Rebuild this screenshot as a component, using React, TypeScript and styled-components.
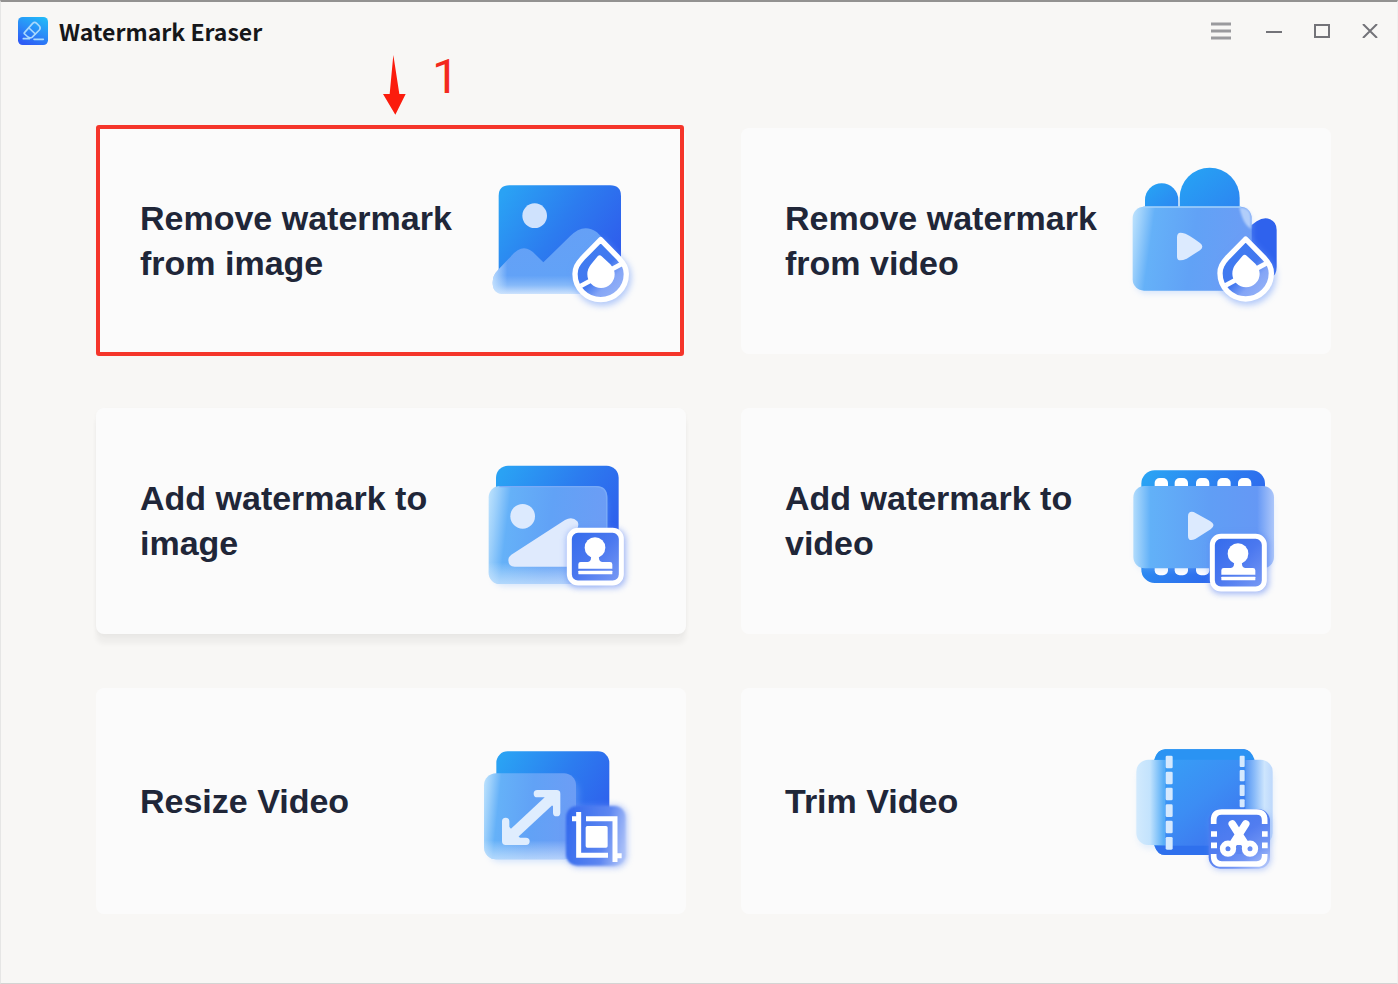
import React from "react";
import styled, { createGlobalStyle } from "styled-components";

const GlobalStyle = createGlobalStyle`
  *, *::before, *::after { box-sizing: border-box; }
  html, body, #root { height: 100%; }
  body {
    margin: 0;
    background: #f8f7f5;
    font-family: "Liberation Sans", Arial, sans-serif;
  }
`;

const Window = styled.div`
  min-height: 100%;
  display: flex;
  flex-direction: column;
  background: #f8f7f5;
  border: 1px solid #e6e6e5;
  border-top: 2px solid #939291;
  border-right-color: #f0f0ef;
  border-bottom-color: #d4d4d3;
`;

const TitleBar = styled.header`
  display: flex;
  align-items: center;
  justify-content: space-between;
  height: 58px;
  padding: 0 11px 0 17px;
`;

const Brand = styled.div`
  display: flex;
  align-items: center;
  gap: 11px;
`;

const BrandName = styled.h1`
  margin: 0;
  font: 700 23px/32px "Noto Sans CJK SC", sans-serif;
  color: #16171a;
`;

const WindowControls = styled.div`
  display: flex;
  align-items: center;
  gap: 16px;
`;

const ControlButton = styled.button`
  display: grid;
  place-items: center;
  width: 32px;
  height: 32px;
  padding: 0;
  border: 0;
  background: none;
  color: #737378;
  cursor: pointer;

  &:first-child {
    margin-right: 5px;
    color: #9a9a9d;
  }
`;

const ToolGrid = styled.main`
  display: grid;
  grid-template-columns: 1fr 1fr;
  column-gap: 55px;
  row-gap: 54px;
  padding: 68px 66px 64px 95px;
`;

const ToolSlot = styled.div`
  position: relative;
`;

const ToolCard = styled.button<{ $raised?: boolean }>`
  display: flex;
  align-items: center;
  width: 100%;
  min-height: 226px;
  padding: 0 30px 0 44px;
  border: 0;
  border-radius: 8px;
  background: #fbfbfb;
  box-shadow: ${(p) =>
    p.$raised ? "0 10px 5px rgba(0, 0, 0, 0.04), 0 2px 4px rgba(0, 0, 0, 0.03)" : "none"};
  text-align: left;
  cursor: pointer;
`;

const ToolName = styled.span`
  flex: 1;
  font: 700 34px/45px "Liberation Sans", Arial, sans-serif;
  color: #202638;
`;

const Art = styled.svg`
  flex: none;
  width: 180px;
  height: 180px;
`;

const HighlightFrame = styled.div`
  position: absolute;
  inset: -3px 2px -2px 0;
  border: 4px solid #f5352a;
  border-radius: 3px;
  pointer-events: none;
`;

const StepMarker = styled.div`
  position: absolute;
  left: 287px;
  bottom: calc(100% + 13px);
  display: flex;
  align-items: flex-end;
  gap: 26px;
`;

const StepNumber = styled.span`
  font: 400 48px/76px Roboto, sans-serif;
  color: #f32a1d;
`;

const SharedDefs = styled.svg`
  position: absolute;
  width: 0;
  height: 0;
`;

const Paints = () => (
  <SharedDefs aria-hidden="true">
    <defs>
      <linearGradient id="blue" x1="0" y1="0.15" x2="1" y2="0.7">
        <stop offset="0" stopColor="#2aa2f4" />
        <stop offset="0.5" stopColor="#2c7cef" />
        <stop offset="1" stopColor="#2f5cec" />
      </linearGradient>
      <linearGradient id="sky" x1="0" y1="0" x2="1" y2="1">
        <stop offset="0" stopColor="#26a5f4" />
        <stop offset="1" stopColor="#2d83f1" />
      </linearGradient>
      <linearGradient id="glass" x1="0" y1="0" x2="1" y2="0.1">
        <stop offset="0" stopColor="#c0e4fd" />
        <stop offset="0.08" stopColor="#9dd0fb" />
        <stop offset="0.19" stopColor="#65b1f8" />
        <stop offset="0.55" stopColor="#61a2f6" />
        <stop offset="1" stopColor="#6c9df5" />
      </linearGradient>
      <linearGradient id="glassBoth" x1="0" y1="0" x2="1" y2="0">
        <stop offset="0" stopColor="#b2dcfc" />
        <stop offset="0.12" stopColor="#62b1f8" />
        <stop offset="0.55" stopColor="#609ef5" />
        <stop offset="0.88" stopColor="#6598f5" />
        <stop offset="1" stopColor="#adc7fa" />
      </linearGradient>
      <linearGradient id="fade" x1="0" y1="0" x2="0" y2="1">
        <stop offset="0" stopColor="#fff" stopOpacity="0" />
        <stop offset="0.78" stopColor="#fff" stopOpacity="0" />
        <stop offset="1" stopColor="#e6f3ff" stopOpacity="0.6" />
      </linearGradient>
      <linearGradient id="hill" gradientUnits="userSpaceOnUse" x1="0" y1="200" x2="0" y2="404">
        <stop offset="0" stopColor="#65a0f6" />
        <stop offset="0.72" stopColor="#62a2f7" />
        <stop offset="0.86" stopColor="#86b9f9" />
        <stop offset="1" stopColor="#d3e6fd" />
      </linearGradient>
      <linearGradient id="hillSide" gradientUnits="userSpaceOnUse" x1="68" y1="0" x2="112" y2="0">
        <stop offset="0" stopColor="#c9e4fe" stopOpacity="0.85" />
        <stop offset="1" stopColor="#c9e4fe" stopOpacity="0" />
      </linearGradient>
      <linearGradient id="badge" x1="0" y1="0" x2="1" y2="1">
        <stop offset="0" stopColor="#326bec" />
        <stop offset="0.5" stopColor="#4b78ef" />
        <stop offset="1" stopColor="#7c9cf5" />
      </linearGradient>
      <linearGradient id="trimBadge" x1="0.1" y1="0" x2="0.8" y2="1">
        <stop offset="0" stopColor="#3f79ef" />
        <stop offset="0.5" stopColor="#527df0" />
        <stop offset="0.8" stopColor="#7396f4" />
        <stop offset="1" stopColor="#a9bff9" />
      </linearGradient>
      <linearGradient id="cropBadge" x1="0" y1="0.4" x2="1" y2="0.6">
        <stop offset="0" stopColor="#356bed" />
        <stop offset="0.65" stopColor="#5d86f1" />
        <stop offset="1" stopColor="#a9bff8" />
      </linearGradient>
      <linearGradient id="drop" x1="0.2" y1="0.2" x2="0.8" y2="0.9">
        <stop offset="0" stopColor="#3f7cf1" />
        <stop offset="0.5" stopColor="#4378ef" />
        <stop offset="0.75" stopColor="#84a5f6" />
        <stop offset="1" stopColor="#92b0f7" />
      </linearGradient>
      <linearGradient id="film" x1="0.1" y1="0" x2="0.7" y2="1">
        <stop offset="0" stopColor="#379ff6" />
        <stop offset="0.5" stopColor="#3c8df4" />
        <stop offset="1" stopColor="#3e72ee" />
      </linearGradient>
      <linearGradient id="pane" x1="0" y1="0" x2="1" y2="0">
        <stop offset="0" stopColor="#d2eafd" />
        <stop offset="0.1" stopColor="#c3e3fd" />
        <stop offset="0.2" stopColor="#58aef7" />
        <stop offset="0.8" stopColor="#5596f4" />
        <stop offset="0.87" stopColor="#8dbdf9" />
        <stop offset="0.94" stopColor="#cde5fd" />
        <stop offset="1" stopColor="#bdd8fc" />
      </linearGradient>
      <filter id="soft" x="-30%" y="-30%" width="160%" height="160%">
        <feGaussianBlur stdDeviation="9" />
      </filter>
      <filter id="edge" x="-10%" y="-10%" width="120%" height="120%">
        <feGaussianBlur stdDeviation="3" />
      </filter>
    </defs>
  </SharedDefs>
);

const DROP =
  "M392 239 L338 294 C321 313 315 324 315 342 A77 77 0 0 0 469 342 C469 324 463 313 446 294 Z";

const DropBadge = ({ x = 0, y = 0 }: { x?: number; y?: number }) => (
  <g transform={`translate(${x} ${y})`}>
    <path d={DROP} fill="#6d9af8" stroke="#6d9af8" strokeWidth="22" opacity="0.5" filter="url(#soft)" transform="translate(4 8)" />
    <path d={DROP} fill="url(#drop)" stroke="#fff" strokeWidth="16" strokeLinejoin="round" />
    <path d="M332 378 L458 310" stroke="#fff" strokeWidth="14" />
    <path d="M383 289 Q389 283 395 289 L421 313 Q434 328 434 343 A41 41 0 0 1 352 343 Q352 326 364 312 Z" fill="#fff" />
  </g>
);

const StampBadge = ({ x = 0, y = 0 }: { x?: number; y?: number }) => (
  <g transform={`translate(${x} ${y})`}>
    <rect x="290" y="266" width="178" height="178" rx="34" fill="#5a82f2" opacity="0.55" filter="url(#soft)" />
    <rect x="298" y="271" width="156" height="158" rx="26" fill="url(#badge)" stroke="#fff" strokeWidth="15" />
    <circle cx="375" cy="323" r="31" fill="#fff" />
    <path d="M363 344 H387 Q384 362 396 366 H420 Q427 366 427 373 V386 H325 V373 Q325 366 332 366 H354 Q366 362 363 344 Z" fill="#fff" />
    <rect x="325" y="392" width="102" height="11" rx="2" fill="#fff" />
  </g>
);

const HILL =
  "M82 332 L122 290 Q160 242 197 284 L220 307 L300 229 Q340 187 381 217 L453 292 V402 H102 Q68 402 68 368 Q68 346 82 332 Z";

const EraseImageArt = () => (
  <Art viewBox="18 -27 540 540" aria-hidden="true">
    <path d="M86 330 V108 Q86 76 118 76 H421 Q453 76 453 108 V360 H100 Z" fill="url(#blue)" />
    <circle cx="194" cy="167" r="37" fill="#cfe2fd" />
    <path d={HILL} fill="url(#hill)" />
    <path d={HILL} fill="url(#hillSide)" />
    <DropBadge />
  </Art>
);

const EraseVideoArt = () => (
  <Art viewBox="33 3 540 540" aria-hidden="true">
    <path d="M105 190 V150 A50 50 0 0 1 205 150 V190 Z" fill="url(#sky)" />
    <path d="M209 190 V143 A90 90 0 0 1 389 143 V190 Z" fill="url(#sky)" />
    <path d="M405 240 L440 214 Q462 200 480 208 Q500 216 500 240 V350 Q500 385 470 385 H405 Z" fill="#2f62ed" />
    <rect x="76" y="186" width="350" height="244" rx="34" fill="#8dbcfb" opacity="0.35" filter="url(#soft)" />
    <rect x="68" y="170" width="357" height="252" rx="34" fill="url(#glass)" />
    <path d="M388 172 Q423 172 423 204 V236 Q400 226 388 172 Z" fill="#c3dafc" opacity="0.8" filter="url(#edge)" />
    <path d="M100 171 H392" stroke="#a5d2fb" strokeWidth="4" />
    <path d="M201 262 Q201 244 218 249 Q232 251 270 279 Q284 290 270 301 L230 326 Q201 338 201 320 Z" fill="#dceafe" />
    <DropBadge x={15} y={28} />
  </Art>
);

const MarkImageArt = () => (
  <Art viewBox="18 -27 540 540" aria-hidden="true">
    <rect x="78" y="77" width="368" height="320" rx="36" fill="url(#blue)" />
    <rect x="70" y="160" width="340" height="278" rx="34" fill="#8dbcfb" opacity="0.35" filter="url(#soft)" />
    <rect x="56" y="138" width="356" height="294" rx="34" fill="url(#glass)" />
    <rect x="56" y="138" width="356" height="294" rx="34" fill="url(#fade)" />
    <path d="M88 140 H378 Q410 140 410 172 V270" fill="none" stroke="#79aaf7" strokeWidth="4" />
    <circle cx="158" cy="229" r="37" fill="#dceafe" />
    <path d="M124 344 L285 240 Q307 228 322 244 Q328 252 322 266 V380 H134 Q115 380 115 360 Q115 350 124 344 Z" fill="#dfeafd" />
    <StampBadge />
  </Art>
);

const MarkVideoArt = () => (
  <Art viewBox="33 -27 540 540" aria-hidden="true">
    <rect x="94" y="91" width="371" height="338" rx="40" fill="url(#blue)" />
    {[134, 194, 258, 322, 384].map((x) => (
      <React.Fragment key={x}>
        <rect x={x} y="114" width="40" height="44" rx="15" fill="#fff" />
        <rect x={x} y="362" width="40" height="44" rx="15" fill="#fff" />
      </React.Fragment>
    ))}
    <rect x="78" y="160" width="410" height="230" rx="34" fill="#8dbcfb" opacity="0.3" filter="url(#soft)" />
    <rect x="70" y="138" width="422" height="247" rx="34" fill="url(#glassBoth)" />
    <path d="M234 229 Q234 212 251 216 L300 243 Q320 254 302 268 L256 297 Q234 307 234 287 Z" fill="#dceafe" />
    <StampBadge x={9} y={18} />
  </Art>
);

const ResizeArt = () => (
  <Art viewBox="18 -57 540 540" aria-hidden="true">
    <rect x="79" y="64" width="339" height="316" rx="34" fill="url(#blue)" />
    <rect x="56" y="150" width="270" height="246" rx="34" fill="#8dbcfb" opacity="0.35" filter="url(#soft)" />
    <rect x="42" y="130" width="276" height="258" rx="36" fill="url(#glass)" />
    <rect x="42" y="130" width="276" height="258" rx="36" fill="url(#fade)" />
    <g fill="none" stroke="#dfedfe" strokeLinecap="round" strokeLinejoin="round">
      <path d="M116 325 L250 200" strokeWidth="33" strokeLinecap="butt" />
      <path d="M202 191 H260 V248 M107 274 V334 H168" strokeWidth="22" />
    </g>
    <path d="M218 196 H256 V236 Z M111 284 V330 H156 Z" fill="#dfedfe" />
    <rect x="290" y="225" width="182" height="188" rx="36" fill="#6b92f5" opacity="0.5" filter="url(#soft)" />
    <rect x="288" y="228" width="178" height="179" rx="34" fill="url(#cropBadge)" filter="url(#edge)" />
    <g fill="none" stroke="#fff" strokeWidth="15">
      <path d="M306 266 H322 M326 246 V376 H414" />
      <path d="M348 266 H435 V396 M435 377 H455" />
    </g>
    <rect x="347" y="288" width="66" height="65" rx="5" fill="#fff" />
  </Art>
);

const TrimArt = () => (
  <Art viewBox="33 -57 540 540" aria-hidden="true">
    <path d="M166 58 H402 Q420 58 432 90 V345 Q420 375 402 375 H166 Q142 375 132 345 V90 Q142 58 166 58 Z" fill="url(#blue)" />
    <rect x="84" y="110" width="406" height="246" rx="36" fill="#a9d0fb" opacity="0.3" filter="url(#soft)" />
    <rect x="79" y="89" width="409" height="256" rx="36" fill="url(#pane)" />
    <rect x="166" y="60" width="240" height="314" fill="url(#film)" />
    <path d="M166 58 H402 Q422 58 434 89 H134 Q142 58 166 58" fill="#2a93f3" />
    <path d="M134 347 H406 V375 H166 Q142 375 134 347 Z" fill="#2f70ed" />
    {[77, 125, 173, 223, 272, 321].map((y) => (
      <rect key={y} x="167" y={y} width="21" height="38" rx="4" fill="#d5e9fe" />
    ))}
    {[77, 120, 164, 208].map((y) => (
      <rect key={y} x="389" y={y} width="15" height={y === 208 ? 24 : 34} rx="3" fill="#d5e9fe" />
    ))}
    <rect x="299" y="246" width="184" height="174" rx="34" fill="#6b92f5" opacity="0.45" filter="url(#soft)" />
    <rect x="296" y="238" width="184" height="178" rx="34" fill="url(#trimBadge)" />
    <path d="M311 282 V270 Q311 246 335 246 H440 Q464 246 464 270 V282 M311 372 V378 Q311 402 335 402 H440 Q464 402 464 378 V372" fill="none" stroke="#fff" strokeWidth="17" />
    <path d="M303 312 H321 M456 312 H473 M303 346 H321 M456 346 H473" stroke="#fff" strokeWidth="17" />
    <g fill="none" stroke="#fff" strokeWidth="17" strokeLinecap="round">
      <circle cx="354" cy="356" r="16" />
      <circle cx="420" cy="356" r="16" />
      <path d="M368 343 L407 282 M406 343 L367 282" strokeWidth="23" />
    </g>
    <path d="M387 306 L410 345 H364 Z" fill="#fff" />
    <path d="M379 358 L387 350 L395 358 V372 H379 Z" fill="#5b84f1" />
  </Art>
);

const Logo = () => (
  <svg width="30" height="28" viewBox="0 0 90 84" aria-hidden="true">
    <defs>
      <linearGradient id="logo" x1="0.8" y1="0" x2="0.3" y2="1">
        <stop offset="0" stopColor="#22b8f8" />
        <stop offset="0.5" stopColor="#2a8df7" />
        <stop offset="1" stopColor="#2e5cf5" />
      </linearGradient>
    </defs>
    <rect width="90" height="84" rx="14" fill="url(#logo)" />
    <g fill="none" stroke="#a9d9fd" strokeWidth="5" strokeLinecap="round" strokeLinejoin="round">
      <path d="M20 46 L44 19 Q50 13 56 19 L64 27 Q69 33 64 39 L42 61 Q36 65 30 60 L20 51 Q17 49 20 46 Z" />
      <path d="M33 33 L52 51 M16 65 H34 M48 67 H76" />
    </g>
  </svg>
);

interface Tool {
  name: string;
  art: React.ReactNode;
  raised?: boolean;
  step?: number;
}

const tools: Tool[] = [
  { name: "Remove watermark from image", art: <EraseImageArt />, step: 1 },
  { name: "Remove watermark from video", art: <EraseVideoArt /> },
  { name: "Add watermark to image", art: <MarkImageArt />, raised: true },
  { name: "Add watermark to video", art: <MarkVideoArt /> },
  { name: "Resize Video", art: <ResizeArt /> },
  { name: "Trim Video", art: <TrimArt /> },
];

export default function App() {
  return (
    <Window>
      <GlobalStyle />
      <Paints />
      <TitleBar>
        <Brand>
          <Logo />
          <BrandName>Watermark Eraser</BrandName>
        </Brand>
        <WindowControls>
          <ControlButton aria-label="Menu">
            <svg width="20" height="20" viewBox="0 0 20 20" stroke="currentColor" strokeWidth="3">
              <path d="M0 3 H20 M0 10 H20 M0 17 H20" />
            </svg>
          </ControlButton>
          <ControlButton aria-label="Minimize">
            <svg width="16" height="16" viewBox="0 0 16 16" stroke="currentColor" strokeWidth="2">
              <path d="M0 9 H16" />
            </svg>
          </ControlButton>
          <ControlButton aria-label="Maximize">
            <svg width="16" height="14" viewBox="0 0 16 14" fill="none" stroke="currentColor" strokeWidth="2">
              <path d="M1 1 H15 V13 H1 Z" />
            </svg>
          </ControlButton>
          <ControlButton aria-label="Close">
            <svg width="16" height="14" viewBox="0 0 16 14" stroke="currentColor" strokeWidth="2">
              <path d="M1 0 L15 14 M15 0 L1 14" />
            </svg>
          </ControlButton>
        </WindowControls>
      </TitleBar>
      <ToolGrid>
        {tools.map((tool) => (
          <ToolSlot key={tool.name}>
            <ToolCard type="button" $raised={tool.raised}>
              <ToolName>{tool.name}</ToolName>
              {tool.art}
            </ToolCard>
            {tool.step && (
              <>
                <HighlightFrame />
                <StepMarker>
                  <svg width="23" height="60" viewBox="0 0 69 180" fill="#fb1c0d" aria-hidden="true">
                    <path d="M31 0 L49 117 L68 117 L37 179 L0 117 L20 117 Z" />
                  </svg>
                  <StepNumber>{tool.step}</StepNumber>
                </StepMarker>
              </>
            )}
          </ToolSlot>
        ))}
      </ToolGrid>
    </Window>
  );
}
